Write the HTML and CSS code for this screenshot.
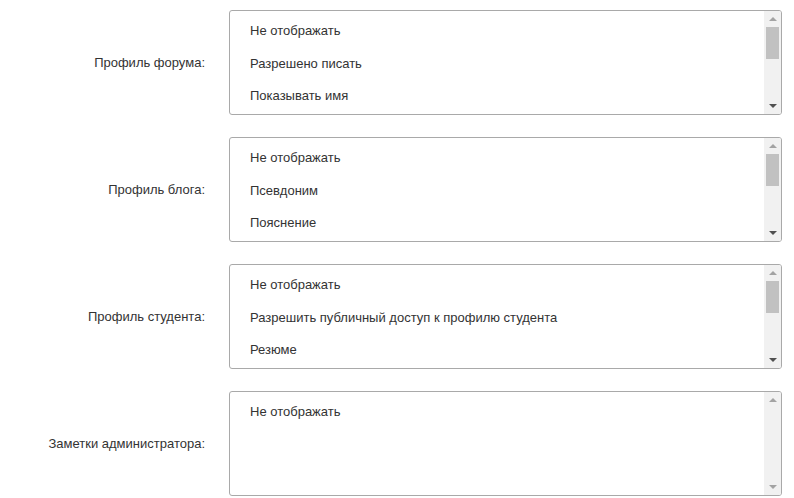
FILE: index.html
```html
<!DOCTYPE html>
<html lang="ru">
  <head>
    <meta charset="UTF-8" />
    <title>Профиль</title>
    <link rel="stylesheet" href="styles.css">
  </head>
  <body>
    <div class="form">
      <div class="row">
        <label class="label">Профиль форума:</label>
        <div class="listbox">
          <ul class="options">
            <li>Не отображать</li>
            <li>Разрешено писать</li>
            <li>Показывать имя</li>
          </ul>
          <div class="scrollbar">
            <span class="arrow up"></span>
            <span class="thumb"></span>
            <span class="arrow down"></span>
          </div>
        </div>
      </div>

      <div class="row">
        <label class="label">Профиль блога:</label>
        <div class="listbox">
          <ul class="options">
            <li>Не отображать</li>
            <li>Псевдоним</li>
            <li>Пояснение</li>
          </ul>
          <div class="scrollbar">
            <span class="arrow up"></span>
            <span class="thumb"></span>
            <span class="arrow down"></span>
          </div>
        </div>
      </div>

      <div class="row">
        <label class="label">Профиль студента:</label>
        <div class="listbox">
          <ul class="options">
            <li>Не отображать</li>
            <li>Разрешить публичный доступ к профилю студента</li>
            <li>Резюме</li>
          </ul>
          <div class="scrollbar">
            <span class="arrow up"></span>
            <span class="thumb"></span>
            <span class="arrow down"></span>
          </div>
        </div>
      </div>

      <div class="row">
        <label class="label">Заметки администратора:</label>
        <div class="listbox">
          <ul class="options">
            <li>Не отображать</li>
          </ul>
          <div class="scrollbar disabled">
            <span class="arrow up"></span>
            <span class="arrow down"></span>
          </div>
        </div>
      </div>
    </div>
  </body>
</html>
```

FILE: styles.css
```css
* {
  box-sizing: border-box;
  margin: 0;
  padding: 0;
}

body {
  font-family: "Liberation Sans", Arial, sans-serif;
  font-size: 13px;
  color: #333;
  background-color: #fff;
}

.form {
  display: flex;
  flex-direction: column;
  gap: 22px;
  padding-top: 10px;
}

.row {
  display: flex;
  align-items: center;
}

.label {
  width: 205px;
  text-align: right;
  margin-right: 24px;
}

.listbox {
  display: flex;
  width: 553px;
  height: 105px;
  border: 1px solid #a9a9a9;
  border-radius: 3px;
  overflow: hidden;
}

.options {
  flex: 1;
  list-style: none;
  padding: 3px 0;
}

.options li {
  height: 32.5px;
  line-height: 33px;
  padding-left: 20px;
  white-space: nowrap;
}

.scrollbar {
  width: 17px;
  background-color: #f1f1f1;
  display: flex;
  flex-direction: column;
  align-items: center;
  justify-content: space-between;
}

.thumb {
  width: 13px;
  flex: 0 0 32px;
  background-color: #c1c1c1;
  margin-bottom: auto;
}

.arrow {
  width: 0;
  height: 0;
  border-left: 4px solid transparent;
  border-right: 4px solid transparent;
  margin: 6px 0;
}

.arrow.up {
  border-bottom: 4px solid #a3a3a3;
  margin-bottom: 6px;
}

.arrow.down {
  border-top: 4px solid #505050;
}

.scrollbar.disabled .arrow.down {
  border-top-color: #a3a3a3;
}
```
